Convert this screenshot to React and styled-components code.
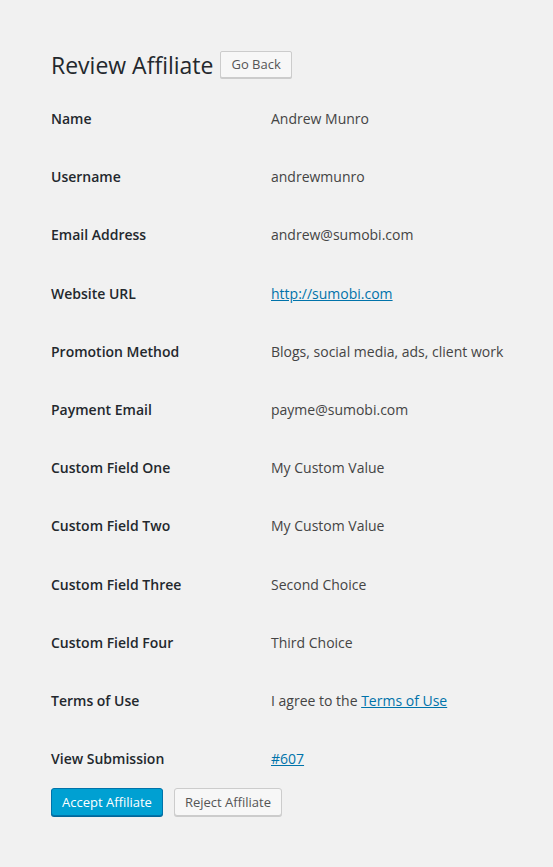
import React from "react";
import styled, { createGlobalStyle } from "styled-components";

const GlobalStyle = createGlobalStyle`
  html, body {
    margin: 0;
    padding: 0;
    background: #f1f1f1;
  }
  body {
    font-family: "Open Sans", sans-serif;
    font-size: 14px;
    color: #444;
  }
`;

const Wrap = styled.div`
  padding: 51px 20px 40px 51px;
`;

const Header = styled.div`
  display: flex;
  align-items: center;
  margin-bottom: 10px;
`;

const Title = styled.h1`
  margin: 0;
  font-size: 23px;
  font-weight: 400;
  line-height: 29px;
  color: #23282d;
`;

const GoBack = styled.a`
  margin-left: 7px;
  margin-top: -2px;
  padding: 0 10px;
  height: 25px;
  line-height: 25px;
  border: 1px solid #ccc;
  border-radius: 2px;
  background: #f7f7f7;
  box-shadow: 0 1px 0 #ccc;
  font-size: 13px;
  color: #555;
  text-decoration: none;
`;

const Table = styled.div`
  display: grid;
  grid-template-columns: 220px 1fr;
`;

const Label = styled.div`
  padding: 20px 0;
  font-weight: 600;
  line-height: 18.2px;
  color: #23282d;
`;

const Value = styled.div`
  padding: 20px 0;
  line-height: 18.2px;
  color: #444;
`;

const Link = styled.a`
  color: #0073aa;
  text-decoration: underline;
`;

const Actions = styled.div`
  display: flex;
  gap: 11px;
`;

const Button = styled.button`
  height: 28px;
  padding: 0 10px;
  border-radius: 3px;
  font-family: "Open Sans", sans-serif;
  font-size: 13px;
  line-height: 26px;
  cursor: pointer;
  border: 1px solid ${(p) => (p.primary ? "#0073aa" : "#ccc")};
  background: ${(p) => (p.primary ? "#00a0d2" : "#f7f7f7")};
  color: ${(p) => (p.primary ? "#fff" : "#555")};
  box-shadow: ${(p) => (p.primary ? "0 1px 0 #006799" : "0 1px 0 #ccc")};
`;

const rows = [
  ["Name", "Andrew Munro"],
  ["Username", "andrewmunro"],
  ["Email Address", "andrew@sumobi.com"],
  ["Website URL", <Link href="#">http://sumobi.com</Link>],
  ["Promotion Method", "Blogs, social media, ads, client work"],
  ["Payment Email", "payme@sumobi.com"],
  ["Custom Field One", "My Custom Value"],
  ["Custom Field Two", "My Custom Value"],
  ["Custom Field Three", "Second Choice"],
  ["Custom Field Four", "Third Choice"],
  ["Terms of Use", <>I agree to the <Link href="#">Terms of Use</Link></>],
  ["View Submission", <Link href="#">#607</Link>],
];

export default function App() {
  return (
    <Wrap>
      <GlobalStyle />
      <Header>
        <Title>Review Affiliate</Title>
        <GoBack href="#">Go Back</GoBack>
      </Header>
      <Table>
        {rows.map(([label, value]) => (
          <React.Fragment key={label}>
            <Label>{label}</Label>
            <Value>{value}</Value>
          </React.Fragment>
        ))}
      </Table>
      <Actions>
        <Button primary>Accept Affiliate</Button>
        <Button>Reject Affiliate</Button>
      </Actions>
    </Wrap>
  );
}
